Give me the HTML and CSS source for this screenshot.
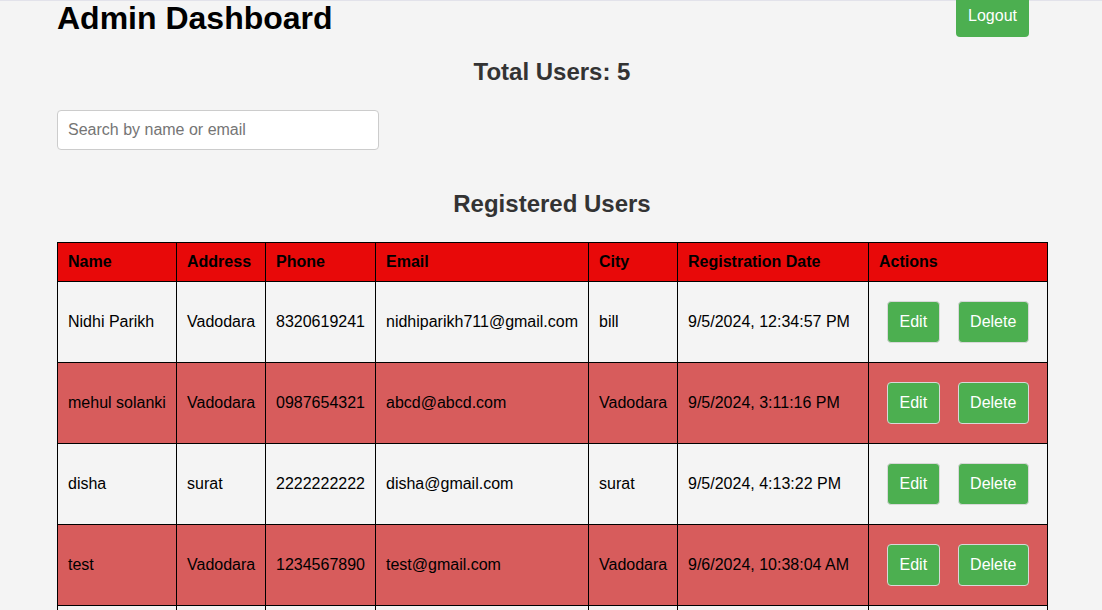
FILE: index.html
```html
<!DOCTYPE html>
<html lang="en">
<head>
<meta charset="utf-8">
<title>Admin Dashboard</title>
<link rel="stylesheet" href="styles.css">
</head>
<body>
<div class="container">
  <header class="topbar">
    <h1 class="title">Admin Dashboard</h1>
    <button class="logout">Logout</button>
  </header>
  <h2 class="total">Total Users: 5</h2>
  <div class="search-wrap">
    <input class="search" type="text" placeholder="Search by name or email">
  </div>
  <h2 class="section-title">Registered Users</h2>
  <table class="users">
    <colgroup>
      <col class="c-name"><col class="c-address"><col class="c-phone"><col class="c-email"><col class="c-city"><col class="c-date"><col class="c-actions">
    </colgroup>
    <thead>
      <tr><th>Name</th><th>Address</th><th>Phone</th><th>Email</th><th>City</th><th>Registration Date</th><th>Actions</th></tr>
    </thead>
    <tbody>
      <tr class="light"><td>Nidhi Parikh</td><td>Vadodara</td><td>8320619241</td><td>nidhiparikh711@gmail.com</td><td>bill</td><td>9/5/2024, 12:34:57 PM</td><td><div class="actions"><button class="btn">Edit</button><button class="btn">Delete</button></div></td></tr>
      <tr class="red"><td>mehul solanki</td><td>Vadodara</td><td>0987654321</td><td>abcd@abcd.com</td><td>Vadodara</td><td>9/5/2024, 3:11:16 PM</td><td><div class="actions"><button class="btn">Edit</button><button class="btn">Delete</button></div></td></tr>
      <tr class="light"><td>disha</td><td>surat</td><td>2222222222</td><td>disha@gmail.com</td><td>surat</td><td>9/5/2024, 4:13:22 PM</td><td><div class="actions"><button class="btn">Edit</button><button class="btn">Delete</button></div></td></tr>
      <tr class="red"><td>test</td><td>Vadodara</td><td>1234567890</td><td>test@gmail.com</td><td>Vadodara</td><td>9/6/2024, 10:38:04 AM</td><td><div class="actions"><button class="btn">Edit</button><button class="btn">Delete</button></div></td></tr>
      <tr class="light"><td>ravi</td><td>Vadodara</td><td>9876543210</td><td>ravi@gmail.com</td><td>Vadodara</td><td>9/7/2024, 11:02:45 AM</td><td><div class="actions"><button class="btn">Edit</button><button class="btn">Delete</button></div></td></tr>
    </tbody>
  </table>
</div>
</body>
</html>
```

FILE: styles.css
```css
html, body {
  margin: 0;
  padding: 0;
}
body {
  background: #f4f4f4;
  font-family: "Liberation Sans", Arial, sans-serif;
  color: #000;
  box-shadow: inset 0 1px 0 #e2e2ea;
  min-height: 100vh;
}
.container {
  padding: 0 55px 0 57px;
}
.topbar {
  display: flex;
  justify-content: space-between;
  align-items: flex-start;
  padding-right: 18px;
}
.title {
  margin: 0;
  font-size: 32px;
  font-weight: bold;
  color: #000;
}
.logout {
  margin-top: -5px;
  background: #4caf50;
  color: #fff;
  border: none;
  border-radius: 4px;
  padding: 12px;
  font-family: "Liberation Sans", Arial, sans-serif;
  font-size: 16px;
  cursor: pointer;
}
.total {
  margin: 21px 0 0;
  text-align: center;
  font-size: 24px;
  color: #333;
}
.search-wrap {
  margin-top: 24px;
}
.search {
  width: 300px;
  padding: 10px;
  font-size: 16px;
  font-family: "Liberation Sans", Arial, sans-serif;
  border: 1px solid #ccc;
  border-radius: 4px;
  background: #fff;
  outline: none;
  display: block;
}
.search::placeholder {
  color: #757575;
}
.section-title {
  margin: 40px 0 24px;
  text-align: center;
  font-size: 24px;
  color: #333;
}
.users {
  width: 100%;
  border-collapse: collapse;
  table-layout: fixed;
  font-size: 16px;
}
.c-name { width: 119px; }
.c-address { width: 89px; }
.c-phone { width: 110px; }
.c-email { width: 213px; }
.c-city { width: 89px; }
.c-date { width: 191px; }
.c-actions { width: 179px; }
.users th, .users td {
  border: 1px solid #000;
  padding: 10px;
  text-align: left;
  white-space: nowrap;
}
.users th {
  background: #e80909;
  color: #000;
  font-weight: bold;
}
.users td {
  vertical-align: middle;
}
.light td { background: #f4f4f4; }
.red td { background: #d75c5c; }
.actions {
  display: flex;
  align-items: center;
  gap: 18px;
  padding: 9px 0 9px 8px;
}
.btn {
  background: #4caf50;
  color: #fff;
  border: 1px solid #d8d8d8;
  border-radius: 4px;
  padding: 11px 11.5px;
  font-family: "Liberation Sans", Arial, sans-serif;
  font-size: 16px;
  cursor: pointer;
}
```
